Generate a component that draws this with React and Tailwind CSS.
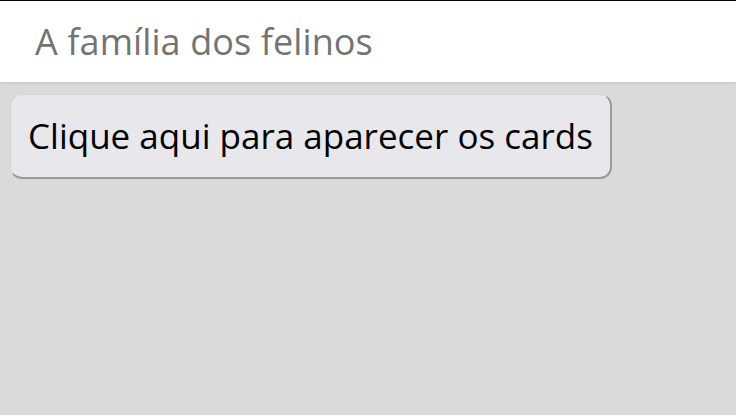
export default function App() {
  return (
    <div className="min-h-[415px] bg-[#dadada] font-['Open_Sans',sans-serif]">
      <header className="h-[82px] border-t border-black bg-white shadow-[0_2px_3px_rgba(0,0,0,0.06)] flex items-center px-[35px]">
        <h1 className="text-[36px] text-[#737373] leading-none tracking-[0.1px]">A família dos felinos</h1>
      </header>
      <div className="px-[10px] pt-[12px]">
        <button className="h-[85px] px-[17px] rounded-[12px] bg-[#e8e8ec] border border-[#d6d6d6] border-r-2 border-b-2 border-r-[#9a9a9a] border-b-[#9a9a9a] text-[35px] text-black">
          Clique aqui para aparecer os cards
        </button>
      </div>
    </div>
  );
}
